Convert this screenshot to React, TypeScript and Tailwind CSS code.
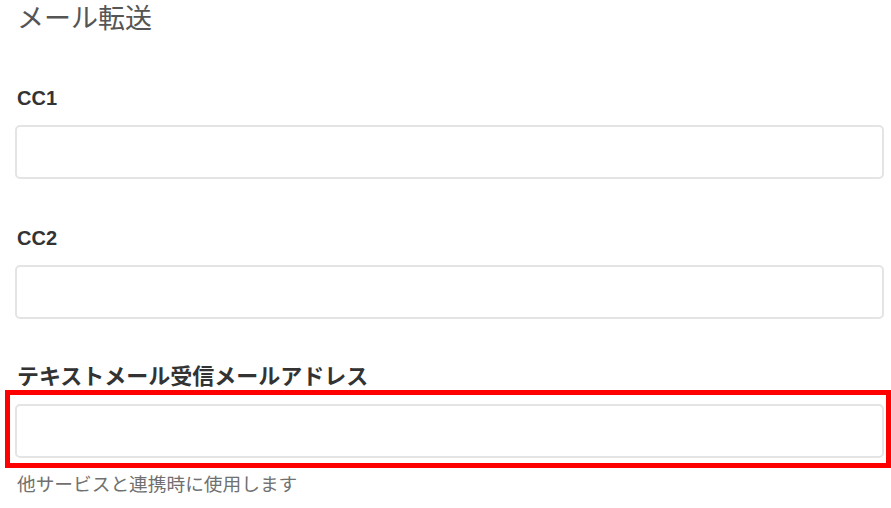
import React from 'react';

const font = 'font-["Liberation_Sans","Noto_Sans_CJK_JP",sans-serif]';

function Field({ label, className, highlight }: { label: string; className: string; highlight?: boolean }) {
  return (
    <div className={className}>
      <label className="block leading-[28px] mb-[13px] font-bold text-[#333] pl-[2px]">{label}</label>
      <div className="relative">
        <input
          type="text"
          className="block w-full h-[54px] rounded-[5px] border-2 border-[#e4e4e4] bg-white px-3 outline-none"
        />
        {/* Red annotation box */}
        {highlight && (
          <div className="absolute -top-[14px] -left-[10px] -right-[7px] -bottom-[10px] border-[5px] border-[#ff0000] pointer-events-none" />
        )}
      </div>
    </div>
  );
}

export default function App() {
  return (
    <div className={`w-[891px] h-[508px] bg-white overflow-hidden pl-[15px] pr-[7px] pt-[1px] ${font}`}>
      <h1 className="text-[27px] leading-[36px] font-normal text-[#555] pl-[2px]">メール転送</h1>

      <Field label="CC1" className="mt-[47px] text-[20px]" />
      <Field label="CC2" className="mt-[45px] text-[20px]" />
      <Field label="テキストメール受信メールアドレス" className="mt-[44px] text-[22px]" highlight />

      <p className="mt-[14px] text-[18.7px] leading-[26px] text-[#707070] pl-[2px]">他サービスと連携時に使用します</p>
    </div>
  );
}
